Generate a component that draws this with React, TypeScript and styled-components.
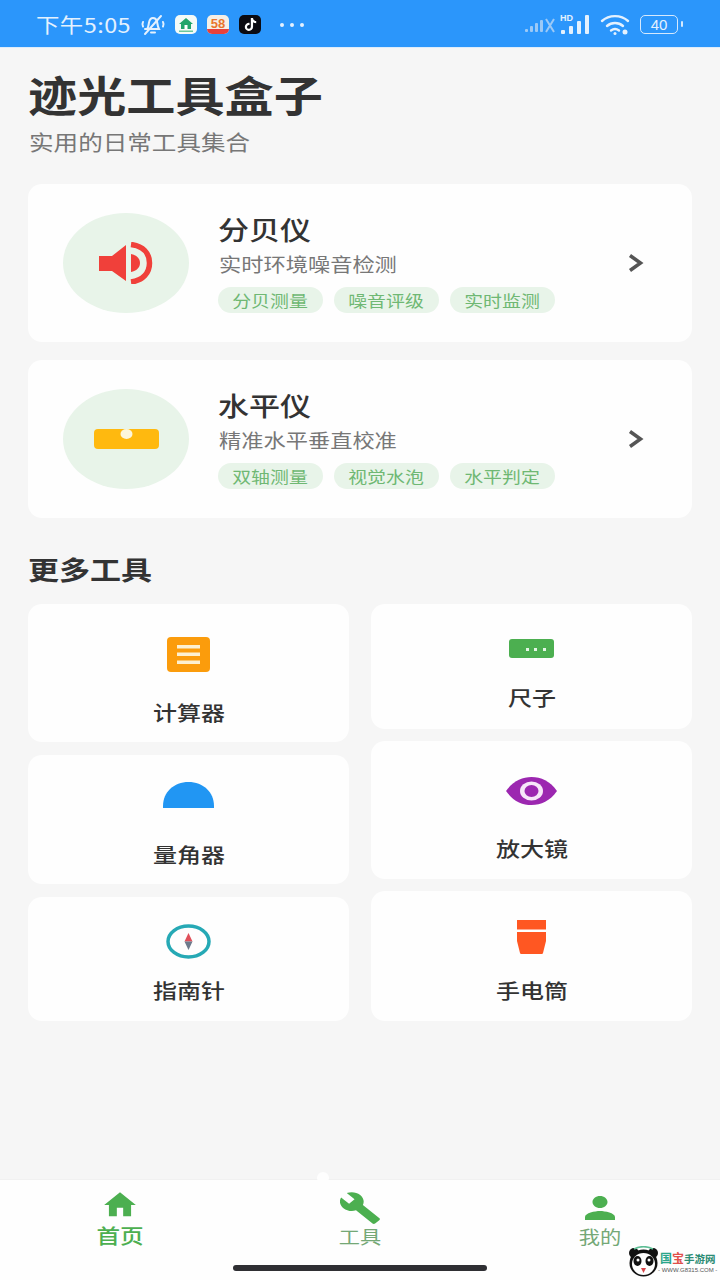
import React from "react";
import styled, { createGlobalStyle, css } from "styled-components";
import { FaTiktok } from "react-icons/fa";

const GlobalStyle = createGlobalStyle`
  html, body {
    margin: 0;
    padding: 0;
    background: #f6f6f6;
  }
  * {
    box-sizing: border-box;
  }
`;

// the screenshot is stretched sideways, so the text is too
const wide = css`
  display: block;
  width: fit-content;
  transform-origin: left center;
  transform: scaleX(1.17);
  white-space: nowrap;
`;

const Page = styled.div`
  width: 720px;
  height: 1280px;
  position: relative;
  overflow: hidden;
  display: flex;
  flex-direction: column;
  background: #f6f6f6;
  font-family: "Noto Sans CJK SC", "Liberation Sans", sans-serif;
`;

const StatusBar = styled.div`
  height: 48px;
  flex: none;
  display: flex;
  align-items: center;
  padding: 2px 42px 0 36px;
  background: #2b96fb;
  border-bottom: 1px solid #dcecfb;
  color: #e4f1fe;
`;

const TimeSlot = styled.div`
  width: 103px;
  flex: none;
`;

const Time = styled.span`
  ${wide}
  font-size: 20px;
  line-height: 24px;
  letter-spacing: 0.4px;
`;

const AppTile = styled.div<{ $bg: string; $first?: boolean }>`
  width: 22px;
  height: 19px;
  border-radius: 5px;
  background: ${(p) => p.$bg};
  margin-left: ${(p) => (p.$first ? 8 : 0)}px;
  margin-right: 10px;
  display: flex;
  align-items: center;
  justify-content: center;
  overflow: hidden;
`;

const Dots = styled.div`
  display: flex;
  gap: 6px;
  margin-left: 9px;
`;

const Dot = styled.i`
  width: 4px;
  height: 4px;
  border-radius: 50%;
  background: #e4f1fe;
`;

const StatusRight = styled.div`
  margin-left: auto;
  display: flex;
  align-items: center;
`;

const SignalGroup = styled.div`
  display: flex;
  align-items: center;
  gap: 4px;
  margin-right: 8px;
`;

const Battery = styled.div`
  width: 38px;
  height: 19px;
  border: 1.5px solid #d5e9fd;
  border-radius: 5px;
  margin-left: 10px;
  display: flex;
  align-items: center;
  justify-content: center;
  position: relative;
  font-family: "Liberation Sans", sans-serif;
  font-size: 15px;
  color: #e4f1fe;
  &::after {
    content: "";
    position: absolute;
    right: -6px;
    top: 5px;
    width: 2px;
    height: 6px;
    border-radius: 1px;
    background: #d5e9fd;
  }
`;

const Main = styled.div`
  flex: 1;
  padding: 21px 28px 0;
`;

const Title = styled.h1`
  ${wide}
  margin: 0;
  font-size: 42px;
  line-height: 50px;
  font-weight: 700;
  color: #333;
`;

const Subtitle = styled.p`
  ${wide}
  margin: 8px 0 0 1px;
  font-size: 21px;
  line-height: 28px;
  font-weight: 400;
  color: #777;
`;

const FeatureList = styled.div`
  margin-top: 29px;
  display: flex;
  flex-direction: column;
  gap: 18px;
`;

const FeatureCard = styled.div`
  height: 158px;
  border-radius: 14px;
  background: #fefefe;
  display: flex;
  align-items: center;
  padding: 0 48px 0 35px;
`;

const IconBlob = styled.div`
  width: 126px;
  height: 100px;
  flex: none;
  border-radius: 50%;
  background: #e8f4e9;
  margin-right: 30px;
  display: flex;
  align-items: center;
  justify-content: center;
`;

const FeatureBody = styled.div`
  flex: 1;
  display: flex;
  flex-direction: column;
`;

const FeatureName = styled.div`
  ${wide}
  margin: -1px 0 0 -1px;
  font-size: 26.5px;
  line-height: 34px;
  font-weight: 500;
  color: #333;
`;

const FeatureDesc = styled.div`
  ${wide}
  margin-top: 5px;
  font-size: 19px;
  line-height: 26px;
  color: #777;
`;

const TagRow = styled.div`
  margin-top: 10px;
  display: flex;
  gap: 11px;
  margin-left: -1px;
`;

const Tag = styled.div`
  width: 105px;
  height: 26px;
  border-radius: 13px;
  background: #e8f4e9;
  display: flex;
  align-items: center;
  justify-content: center;
`;

const TagText = styled.span`
  ${wide}
  transform-origin: center;
  transform: scaleX(1.18);
  font-size: 16px;
  line-height: 26px;
  color: #6fb873;
`;

const SectionTitle = styled.h2`
  ${wide}
  margin: 33px 0 17px 0;
  font-size: 26.5px;
  line-height: 36px;
  font-weight: 700;
  color: #333;
`;

const ToolGrid = styled.div`
  display: flex;
  gap: 22px;
`;

const ToolColumn = styled.div<{ $gap: number }>`
  flex: 1;
  display: flex;
  flex-direction: column;
  gap: ${(p) => p.$gap}px;
`;

const ToolCard = styled.div<{ $h: number; $top: number }>`
  height: ${(p) => p.$h}px;
  padding-top: ${(p) => p.$top}px;
  border-radius: 14px;
  background: #fefefe;
  display: flex;
  flex-direction: column;
  align-items: center;
  svg {
    display: block;
    flex: none;
  }
`;

const ToolLabel = styled.div<{ $gap: number }>`
  ${wide}
  transform-origin: center;
  transform: scaleX(1.2);
  margin-top: ${(p) => p.$gap}px;
  font-size: 20px;
  line-height: 28px;
  font-weight: 500;
  color: #333;
`;

const BottomNav = styled.div`
  height: 101px;
  flex: none;
  position: relative;
  background: #fefefe;
  border-top: 1px solid #f1f1f1;
  display: flex;
  flex-direction: column;
  align-items: center;
  &::before {
    content: "";
    position: absolute;
    left: 317px;
    top: -8px;
    width: 12px;
    height: 12px;
    border-radius: 50%;
    background: #fefefe;
  }
`;

const Tabs = styled.div`
  width: 100%;
  height: 85px;
  display: flex;
`;

const Tab = styled.div`
  flex: 1;
  display: flex;
  flex-direction: column;
  align-items: center;
  padding-top: 12px;
`;

const TabIconSlot = styled.div`
  height: 32px;
  display: flex;
  align-items: flex-start;
  justify-content: center;
  svg {
    display: block;
    fill: #4caf50;
  }
`;

const TabLabel = styled.div<{ $active?: boolean }>`
  ${wide}
  transform-origin: center;
  transform: scaleX(1.18);
  margin-top: -1px;
  font-size: ${(p) => (p.$active ? 20 : 18)}px;
  line-height: 26px;
  font-weight: ${(p) => (p.$active ? 500 : 400)};
  color: ${(p) => (p.$active ? "#4caf50" : "#74a876")};
`;

const HomeBar = styled.div`
  width: 254px;
  height: 6px;
  border-radius: 3px;
  background: #2f2f33;
`;

const Watermark = styled.div`
  position: absolute;
  right: 0;
  bottom: 0;
  width: 94px;
  height: 36px;
  display: flex;
  align-items: center;
  padding-left: 2px;
  background: #fefefe;
  svg {
    flex: none;
  }
`;

const WatermarkText = styled.div`
  margin-left: -1px;
  display: flex;
  flex-direction: column;
  align-items: center;
`;

const WatermarkName = styled.div`
  font-size: 10.5px;
  line-height: 15px;
  font-weight: 700;
  white-space: nowrap;
  color: #2c8c74;
`;

const WatermarkAccent = styled.span<{ $color: string }>`
  color: ${(p) => p.$color};
  font-size: 12px;
`;

const WatermarkUrl = styled.div`
  font-family: "Liberation Sans", sans-serif;
  font-size: 6px;
  line-height: 8px;
  color: #555;
  white-space: nowrap;
`;

const BellMute = () => (
  <svg width="28" height="22" viewBox="0 0 28 22" fill="none" stroke="#e4f1fe" strokeWidth="2" strokeLinecap="round">
    <path d="M8 15c1.500-1.500 1.500-4 2-6.500C10.600 5.500 12 4 14 4s3.400 1.200 4 3.500c.5 2.500.6 5 2 7.500H6" />
    <path d="M12 18.500h4" />
    <path d="M6 20 22 2" />
    <path d="M4 8c-.8 1.500-.8 3 0 4.500M24 8c.8 1.500.8 3 0 4.500" />
  </svg>
);

const HomeApp = () => (
  <svg width="22" height="19" viewBox="0 0 22 19">
    <path d="M11 3 4 9h2v5h10V9h2z" fill="#23a56b" />
    <rect x="9.500" y="10" width="3" height="4" fill="#fff" />
    <rect x="4" y="15.500" width="14" height="1.500" fill="#6cc79c" />
  </svg>
);

const FiftyEight = () => (
  <svg width="22" height="19" viewBox="0 0 22 19">
    <rect width="22" height="5" y="14" fill="#e8413c" />
    <text x="11" y="12.500" textAnchor="middle" fontSize="13" fontWeight="700" fontFamily="Liberation Sans" fill="#e9752c">
      58
    </text>
  </svg>
);

const FaintSignal = () => (
  <svg width="31" height="20" viewBox="0 0 31 20" fill="#9cc9f6">
    <rect x="0" y="14" width="3" height="3" rx="1" />
    <rect x="5" y="11" width="3" height="6" rx="1" />
    <rect x="10" y="8" width="3" height="9" rx="1" />
    <rect x="15" y="5" width="3" height="12" rx="1" />
    <path d="M21 4l8 13M29 4l-8 13" stroke="#9cc9f6" strokeWidth="2" fill="none" />
  </svg>
);

const HdSignal = () => (
  <svg width="32" height="24" viewBox="0 0 32 24" fill="#e4f1fe">
    <text x="0" y="8" fontSize="9" fontWeight="700" fontFamily="Liberation Sans">
      HD
    </text>
    <rect x="1" y="17" width="4" height="4" rx="1" />
    <rect x="9" y="13" width="4" height="8" rx="1" />
    <rect x="17" y="8" width="4" height="13" rx="1" />
    <rect x="25" y="2" width="4" height="19" rx="1" />
  </svg>
);

const Wifi = () => (
  <svg width="30" height="22" viewBox="0 0 30 22" fill="none" stroke="#e4f1fe" strokeWidth="2.400" strokeLinecap="round">
    <path d="M2 7c7-6.500 19-6.500 26 0" />
    <path d="M7 12c4.500-4 11.500-4 16 0" />
    <path d="M11 16.500c2.500-2 5.500-2 8 0" />
    <circle cx="15" cy="19.500" r="1.500" fill="#e4f1fe" stroke="none" />
    <circle cx="25" cy="18" r="2.500" fill="#e4f1fe" stroke="none" />
  </svg>
);

const SpeakerIcon = () => (
  <svg width="54" height="42" viewBox="0 0 54 42">
    <path d="M0 14h13L27 3v36L13 29H0z" fill="#f0403a" />
    <path d="M32 12c5.500 1 9 4.500 9 9s-3.500 8-9 9z" fill="#f0403a" />
    <path d="M32 2.500C44 4 50.500 11 50.500 21S44 38.500 32 40" fill="none" stroke="#f0403a" strokeWidth="5.500" />
  </svg>
);

const LevelIcon = () => (
  <svg width="65" height="20" viewBox="0 0 65 20">
    <rect x="0" y="0" width="65" height="20" rx="4" fill="#ffb90f" />
    <ellipse cx="32.500" cy="5" rx="6" ry="5" fill="#fdf6dc" />
  </svg>
);

const CalculatorIcon = () => (
  <svg width="43" height="35" viewBox="0 0 43 35">
    <rect width="43" height="35" rx="4" fill="#fb9c0c" />
    <rect x="10" y="8" width="23" height="3.500" fill="#fdf0d0" />
    <rect x="10" y="15.500" width="23" height="3.500" fill="#fdf0d0" />
    <rect x="10" y="23.500" width="23" height="3.500" fill="#fdf0d0" />
  </svg>
);

const RulerIcon = () => (
  <svg width="45" height="19" viewBox="0 0 45 19">
    <rect width="45" height="19" rx="3" fill="#4caf50" />
    <rect x="17" y="9" width="3" height="3" fill="#e6f5e6" />
    <rect x="25" y="9" width="3" height="3" fill="#e6f5e6" />
    <rect x="34" y="9" width="3" height="3" fill="#e6f5e6" />
  </svg>
);

const ProtractorIcon = () => (
  <svg width="51" height="26" viewBox="0 0 51 26">
    <path d="M0 26V24C0 10 11 0 25.500 0S51 10 51 24v2z" fill="#2196f3" />
  </svg>
);

const EyeIcon = () => (
  <svg width="51" height="28" viewBox="0 0 51 28">
    <path d="M0 14C7 4 16 0 25.500 0S44 4 51 14C44 24 35 28 25.500 28S7 24 0 14z" fill="#9c27b0" />
    <ellipse cx="25.500" cy="14" rx="11.500" ry="9.500" fill="#f7e6f9" />
    <ellipse cx="25.500" cy="14" rx="7" ry="6" fill="#9c27b0" />
  </svg>
);

const CompassIcon = () => (
  <svg width="45" height="35" viewBox="0 0 45 35">
    <ellipse cx="22.500" cy="17.500" rx="20.500" ry="15.500" fill="none" stroke="#26a9b5" strokeWidth="3.500" />
    <path d="M22.500 9l4 8.500h-8z" fill="#e0505a" />
    <path d="M22.500 26l4-8.500h-8z" fill="#6d7a8c" />
  </svg>
);

const FlashlightIcon = () => (
  <svg width="29" height="34" viewBox="0 0 29 34">
    <rect width="29" height="9.500" fill="#ff5722" />
    <path d="M0 12h29v9l-3 12c-.2.600-.6 1-1 1H4c-.4 0-.8-.4-1-1L0 21z" fill="#ff5722" />
  </svg>
);

const Chevron = () => (
  <svg width="16" height="20" viewBox="0 0 16 20" fill="none" stroke="#555" strokeWidth="3.500">
    <path d="M2 2.500l10.500 7.500L2 17.500" />
  </svg>
);

const HomeTabIcon = () => (
  <svg width="38" height="34" viewBox="0 0 24 24" preserveAspectRatio="none" style={{ marginTop: -4 }}>
    <path d="M10 20v-6h4v6h5v-8h3L12 3 2 12h3v8z" />
  </svg>
);

const WrenchTabIcon = () => (
  <svg width="40" height="32" viewBox="1 1 22 22" preserveAspectRatio="none">
    <path d="M22.700 19l-9.100-9.100c.9-2.300.4-5-1.500-6.900-2-2-5-2.400-7.400-1.300L9 6 6 9 1.600 4.700C.4 7.100.9 10.100 2.900 12.100c1.900 1.900 4.600 2.400 6.900 1.500l9.100 9.100c.4.400 1 .4 1.400 0l2.300-2.300c.5-.4.5-1.100.1-1.400z" />
  </svg>
);

const PersonTabIcon = () => (
  <svg width="30" height="24" viewBox="4 4 16 16" preserveAspectRatio="none" style={{ marginTop: 4 }}>
    <path d="M12 12c2.210 0 4-1.790 4-4s-1.790-4-4-4-4 1.790-4 4 1.790 4 4 4zm0 2c-2.670 0-8 1.340-8 4v2h16v-2c0-2.660-5.330-4-8-4z" />
  </svg>
);

const PandaLogo = () => (
  <svg width="31" height="32" viewBox="0 0 31 32">
    <circle cx="6" cy="7" r="5" fill="#111" />
    <circle cx="25" cy="7" r="5" fill="#111" />
    <ellipse cx="15.500" cy="17" rx="14" ry="13.500" fill="#111" />
    <ellipse cx="15.500" cy="18" rx="11.500" ry="11" fill="#fff" />
    <ellipse cx="9.500" cy="15" rx="4" ry="5" fill="#111" />
    <ellipse cx="21.500" cy="15" rx="4" ry="5" fill="#111" />
    <circle cx="10" cy="14" r="1.500" fill="#fff" />
    <circle cx="21" cy="14" r="1.500" fill="#fff" />
    <path d="M13 22h5l-2.500 5z" fill="#d8464a" />
    <path d="M6 3c6-3 13-3 19 0" fill="none" stroke="#5dbd94" strokeWidth="1.500" />
  </svg>
);

const features = [
  {
    name: "分贝仪",
    desc: "实时环境噪音检测",
    tags: ["分贝测量", "噪音评级", "实时监测"],
    icon: <SpeakerIcon />,
  },
  {
    name: "水平仪",
    desc: "精准水平垂直校准",
    tags: ["双轴测量", "视觉水泡", "水平判定"],
    icon: <LevelIcon />,
  },
];

const leftTools = [
  { label: "计算器", h: 138, top: 33, gap: 27, icon: <CalculatorIcon /> },
  { label: "量角器", h: 129, top: 27, gap: 33, icon: <ProtractorIcon /> },
  { label: "指南针", h: 124, top: 27, gap: 18, icon: <CompassIcon /> },
];

const rightTools = [
  { label: "尺子", h: 125, top: 35, gap: 26, icon: <RulerIcon /> },
  { label: "放大镜", h: 138, top: 36, gap: 30, icon: <EyeIcon /> },
  { label: "手电筒", h: 130, top: 29, gap: 23, icon: <FlashlightIcon /> },
];

const renderTools = (tools: typeof leftTools) =>
  tools.map((tool) => (
    <ToolCard key={tool.label} $h={tool.h} $top={tool.top}>
      {tool.icon}
      <ToolLabel $gap={tool.gap}>{tool.label}</ToolLabel>
    </ToolCard>
  ));

const App = () => {
  return (
    <Page>
      <GlobalStyle />
      <StatusBar>
        <TimeSlot>
          <Time>下午5:05</Time>
        </TimeSlot>
        <BellMute />
        <AppTile $bg="#f4faf7" $first>
          <HomeApp />
        </AppTile>
        <AppTile $bg="#f5efe6">
          <FiftyEight />
        </AppTile>
        <AppTile $bg="#0b0b12">
          <FaTiktok size={13} color="#fff" />
        </AppTile>
        <Dots>
          <Dot />
          <Dot />
          <Dot />
        </Dots>
        <StatusRight>
          <SignalGroup>
            <FaintSignal />
            <HdSignal />
          </SignalGroup>
          <Wifi />
          <Battery>40</Battery>
        </StatusRight>
      </StatusBar>

      <Main>
        <Title>迹光工具盒子</Title>
        <Subtitle>实用的日常工具集合</Subtitle>

        <FeatureList>
          {features.map((feature) => (
            <FeatureCard key={feature.name}>
              <IconBlob>{feature.icon}</IconBlob>
              <FeatureBody>
                <FeatureName>{feature.name}</FeatureName>
                <FeatureDesc>{feature.desc}</FeatureDesc>
                <TagRow>
                  {feature.tags.map((tag) => (
                    <Tag key={tag}>
                      <TagText>{tag}</TagText>
                    </Tag>
                  ))}
                </TagRow>
              </FeatureBody>
              <Chevron />
            </FeatureCard>
          ))}
        </FeatureList>

        <SectionTitle>更多工具</SectionTitle>
        <ToolGrid>
          <ToolColumn $gap={13}>{renderTools(leftTools)}</ToolColumn>
          <ToolColumn $gap={12}>{renderTools(rightTools)}</ToolColumn>
        </ToolGrid>
      </Main>

      <BottomNav>
        <Tabs>
          <Tab>
            <TabIconSlot>
              <HomeTabIcon />
            </TabIconSlot>
            <TabLabel $active>首页</TabLabel>
          </Tab>
          <Tab>
            <TabIconSlot>
              <WrenchTabIcon />
            </TabIconSlot>
            <TabLabel>工具</TabLabel>
          </Tab>
          <Tab>
            <TabIconSlot>
              <PersonTabIcon />
            </TabIconSlot>
            <TabLabel>我的</TabLabel>
          </Tab>
        </Tabs>
        <HomeBar />
      </BottomNav>

      <Watermark>
        <PandaLogo />
        <WatermarkText>
          <WatermarkName>
            <WatermarkAccent $color="#2aa58a">国</WatermarkAccent>
            <WatermarkAccent $color="#e0504a">宝</WatermarkAccent>手游网
          </WatermarkName>
          <WatermarkUrl>- WWW.G8315.COM -</WatermarkUrl>
        </WatermarkText>
      </Watermark>
    </Page>
  );
};

export default App;
